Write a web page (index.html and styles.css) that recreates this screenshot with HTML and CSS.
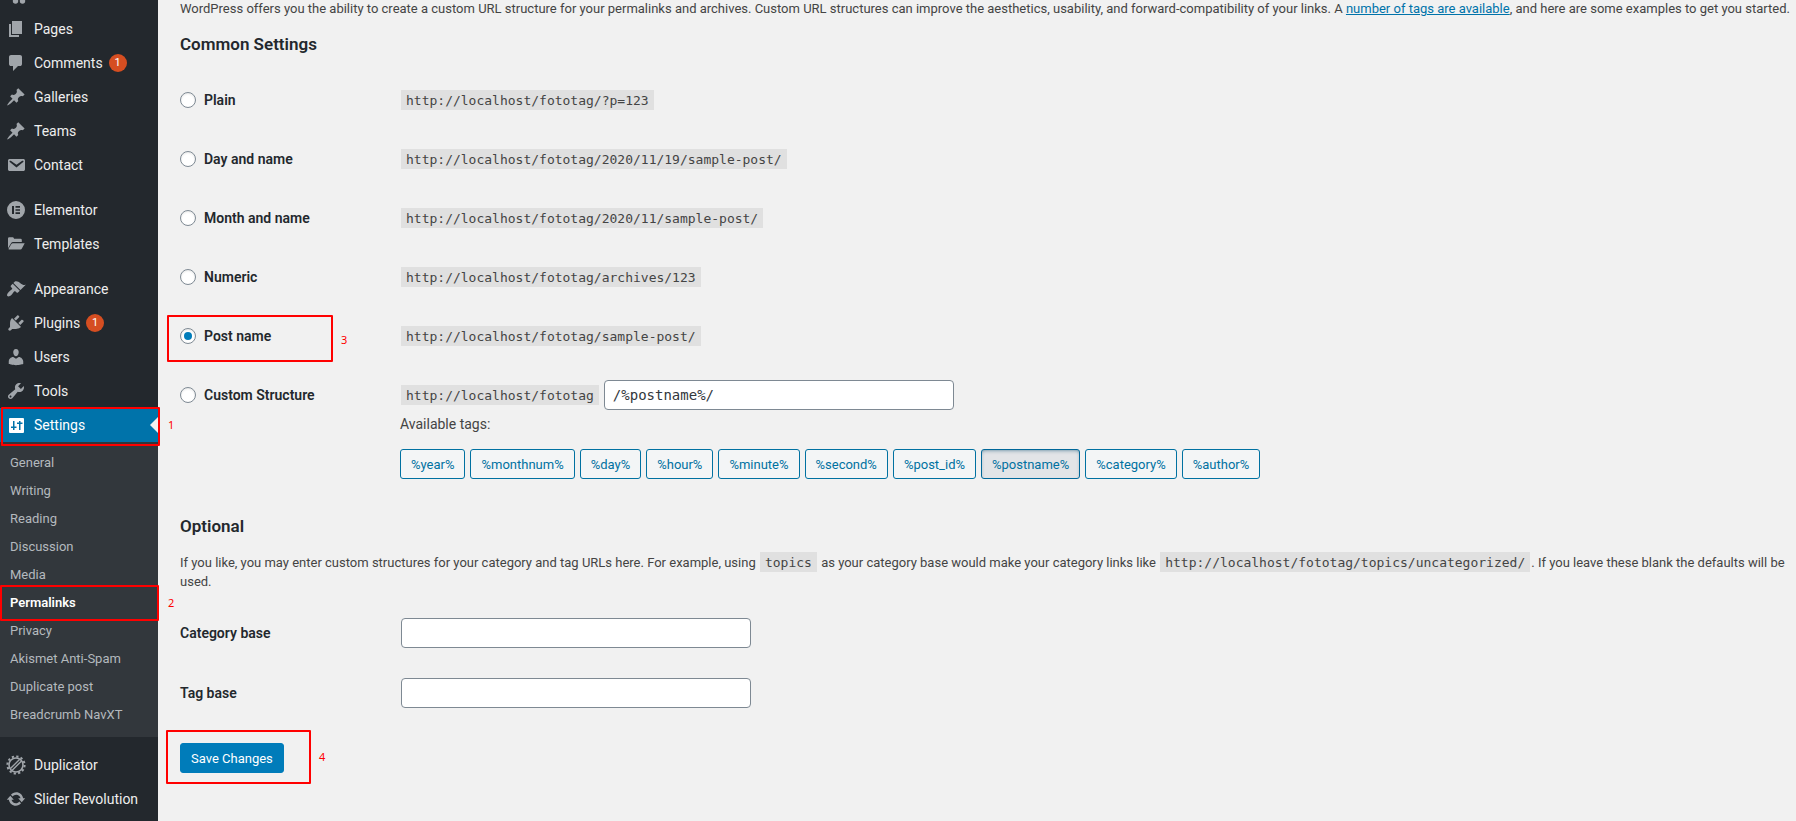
FILE: index.html
```html
<!DOCTYPE html>
<html lang="en">
<head>
<meta charset="utf-8">
<title>Permalink Settings</title>
<link rel="stylesheet" href="styles.css">
</head>
<body>
<div class="admin">
  <nav class="sidebar" aria-label="Main menu">
    <div class="clipped-item"><svg class="icon-tail" viewBox="0 0 20 12" aria-hidden="true"><circle cx="9.500" cy="1" r="2.700"/><circle cx="16.500" cy="1" r="2.700"/></svg></div>
    <ul class="menu">
      <li><a class="item" href="#"><svg class="icon" viewBox="0 0 20 20"><path d="M6 15V2h10v13H6zm-1 1h8v2H3V5h2v11z"/></svg>Pages</a></li>
      <li><a class="item" href="#"><svg class="icon" viewBox="0 0 20 20"><path d="M5 2h9q.82 0 1.410.59T16 4v7q0 .82-.59 1.410T14 13h-2l-5 5v-5H5q-.82 0-1.410-.59T3 11V4q0-.82.59-1.410T5 2z"/></svg>Comments<span class="badge">1</span></a></li>
      <li><a class="item" href="#"><svg class="icon" viewBox="0 0 20 20"><path d="M10.440 3.020l1.820-1.820 6.360 6.350-1.830 1.820c-1.050-.68-2.480-.57-3.410.36l-.75.75c-.92.93-1.040 2.350-.35 3.410l-1.830 1.820-2.410-2.410-2.800 2.790c-.42.42-3.380 2.710-3.800 2.290s1.860-3.390 2.280-3.810l2.790-2.790L4.100 9.360l1.830-1.820c1.050.69 2.480.57 3.400-.36l.75-.75c.93-.92 1.050-2.350.36-3.410z"/></svg>Galleries</a></li>
      <li><a class="item" href="#"><svg class="icon" viewBox="0 0 20 20"><path d="M10.440 3.020l1.820-1.820 6.360 6.350-1.830 1.820c-1.050-.68-2.480-.57-3.410.36l-.75.75c-.92.93-1.040 2.350-.35 3.410l-1.830 1.820-2.410-2.410-2.800 2.790c-.42.42-3.380 2.710-3.800 2.290s1.860-3.390 2.280-3.810l2.790-2.790L4.100 9.360l1.830-1.820c1.050.69 2.480.57 3.400-.36l.75-.75c.93-.92 1.050-2.350.36-3.410z"/></svg>Teams</a></li>
      <li><a class="item" href="#"><svg class="icon" viewBox="0 0 20 20"><path d="M3.870 4h13.250C18.370 4 19 4.590 19 5.790v8.420c0 1.190-.63 1.790-1.880 1.790H3.870c-1.250 0-1.880-.6-1.880-1.790V5.790c0-1.200.63-1.790 1.880-1.790zm6.620 8.600l6.740-5.530c.24-.2.43-.66.13-1.070-.29-.41-.82-.42-1.170-.17l-5.700 3.860L4.800 5.830c-.35-.25-.88-.24-1.170.17-.3.41-.11.87.13 1.070z"/></svg>Contact</a></li>
    </ul>
    <ul class="menu">
      <li><a class="item" href="#"><svg class="icon" viewBox="0 0 20 20"><path fill-rule="evenodd" d="M10 1a9 9 0 1 0 0 18a9 9 0 0 0 0-18zM6 6h2v8H6zM9.500 6H14v1.700H9.500zM9.500 9.150H14v1.700H9.500zM9.500 12.300H14V14H9.500z"/></svg>Elementor</a></li>
      <li><a class="item" href="#"><svg class="icon" viewBox="0 0 20 20"><path d="M2 14.200V4.500Q2 3.200 3.300 3.200H6.800Q8 3.200 8 4.700H14.500Q15.800 4.700 15.800 6V8H7Q5.800 8 5.200 9zM6.900 9.200H18.700L15.900 14.500Q15.400 15.400 14.400 15.400H3Q2.200 15.400 2.700 14.500L5.200 10.200Q5.800 9.200 6.900 9.200z"/></svg>Templates</a></li>
    </ul>
    <ul class="menu">
      <li><a class="item" href="#"><svg class="icon" viewBox="0 0 20 20"><path d="M14.480 11.060L7.410 3.990l1.500-1.500c.5-.56 2.300-.47 3.510.32 1.210.8 1.430 1.280 2.910 2.100 1.180.64 2.450 1.260 4.450.85zm-.71.71L6.700 4.700 4.930 6.470c-.39.39-.39 1.020 0 1.410l1.060 1.060c.39.39.39 1.030 0 1.420-.6.6-1.430 1.110-2.210 1.690-.35.26-.7.53-1.010.84C1.430 14.230.4 16.080 1.400 17.070c.99 1 2.840-.03 4.180-1.360.31-.31.58-.66.85-1.020.57-.78 1.080-1.610 1.690-2.210.39-.39 1.020-.39 1.410 0l1.060 1.060c.39.39 1.020.39 1.410 0z"/></svg>Appearance</a></li>
      <li><a class="item" href="#"><svg class="icon" viewBox="0 0 20 20"><path d="M13.110 4.360L9.870 7.600 8 5.730l3.240-3.240c.35-.34 1.050-.2 1.560.32.52.51.66 1.210.31 1.550zm-8 1.770l.91-1.120 9.010 9.010-1.190.84c-.71.71-2.630 1.160-3.820 1.160H6.140L4.900 17.260c-.59.59-1.540.59-2.120 0-.59-.58-.59-1.530 0-2.120l1.240-1.240v-3.880c0-1.130.4-3.190 1.090-3.890zm7.260 3.970l3.240-3.240c.34-.35 1.040-.21 1.550.31.52.51.66 1.210.31 1.550l-3.240 3.250z"/></svg>Plugins<span class="badge">1</span></a></li>
      <li><a class="item" href="#"><svg class="icon" viewBox="0 0 20 20"><path d="M10 9.250c-2.270 0-2.730-3.440-2.730-3.440C7 4.020 7.820 2 9.970 2c2.160 0 2.980 2.020 2.710 3.810 0 0-.41 3.440-2.680 3.440zm0 2.570L12.720 10c2.390 0 4.520 2.330 4.520 4.530v2.490s-3.650 1.130-7.240 1.130c-3.650 0-7.240-1.130-7.240-1.130v-2.490c0-2.250 1.940-4.480 4.470-4.480z"/></svg>Users</a></li>
      <li><a class="item" href="#"><svg class="icon" viewBox="0 0 20 20"><path d="M16.680 9.770c-1.340 1.340-3.300 1.670-4.950.99l-5.410 6.520c-.99.99-2.590.99-3.580 0s-.99-2.590 0-3.570l6.520-5.420c-.68-1.650-.35-3.610.99-4.950 1.280-1.280 3.120-1.620 4.720-1.060l-2.890 2.890 2.820 2.820 2.860-2.870c.53 1.580.18 3.390-1.080 4.650zM3.810 16.210c.4.39 1.040.39 1.430 0 .4-.4.4-1.040 0-1.430-.39-.4-1.030-.4-1.430 0-.39.39-.39 1.030 0 1.430z"/></svg>Tools</a></li>
      <li class="marked">
        <a class="item current" href="#"><svg class="icon" viewBox="0 0 20 20"><path fill-rule="evenodd" d="M4 3h13q1 0 1 1v13q0 1-1 1H4q-1 0-1-1V4q0-1 1-1zM7 6v5.500H5V13h2v2h1.500v-2h2v-1.500h-2V6zM13 6v1.500h-2V9h2v6h1.500V9h2V7.500h-2V6z"/></svg>Settings</a>
        <span class="frame frame-settings"></span><span class="step step-settings">1</span>
      </li>
    </ul>
    <ul class="submenu">
      <li><a href="#">General</a></li>
      <li><a href="#">Writing</a></li>
      <li><a href="#">Reading</a></li>
      <li><a href="#">Discussion</a></li>
      <li><a href="#">Media</a></li>
      <li class="marked"><a class="selected" href="#" aria-current="page">Permalinks</a><span class="frame frame-permalinks"></span><span class="step step-permalinks">2</span></li>
      <li><a href="#">Privacy</a></li>
      <li><a href="#">Akismet Anti-Spam</a></li>
      <li><a href="#">Duplicate post</a></li>
      <li><a href="#">Breadcrumb NavXT</a></li>
    </ul>
    <ul class="menu">
      <li><a class="item" href="#"><svg class="icon" viewBox="0 0 20 20"><g fill="none" stroke="currentColor"><circle cx="10" cy="10" r="8.600" stroke-width="2" stroke-dasharray="2.250 2.250"/><circle cx="10" cy="10" r="7" stroke-width="1.600"/><path d="M4.500 13.500L13.500 4.500M6 15.500L15.500 6" stroke-width="1.400"/></g></svg>Duplicator</a></li>
      <li><a class="item" href="#"><svg class="icon" viewBox="0 0 20 20"><path d="M10.200 3.280c3.530 0 6.430 2.610 6.920 6h2.080l-3.500 4-3.500-4h2.320c-.45-1.970-2.210-3.450-4.320-3.450-1.450 0-2.730.71-3.540 1.780L4.950 5.660C6.230 4.200 8.110 3.280 10.200 3.280zm-.4 13.440c-3.520 0-6.430-2.610-6.920-6H.8l3.500-4c1.170 1.330 2.330 2.670 3.500 4H5.480c.45 1.970 2.210 3.450 4.320 3.450 1.450 0 2.730-.71 3.540-1.780l1.710 1.950c-1.280 1.460-3.150 2.380-5.250 2.380z"/></svg>Slider Revolution</a></li>
    </ul>
  </nav>

  <main class="content">
    <form>
      <p class="intro">WordPress offers you the ability to create a custom URL structure for your permalinks and archives. Custom URL structures can improve the aesthetics, usability, and forward-compatibility of your links. A <a href="#">number of tags are available</a>, and here are some examples to get you started.</p>
      <h2>Common Settings</h2>
      <div class="rows">
        <div class="row"><label class="name"><input type="radio" name="structure">Plain</label><div><code>http://localhost/fototag/?p=123</code></div></div>
        <div class="row"><label class="name"><input type="radio" name="structure">Day and name</label><div><code>http://localhost/fototag/2020/11/19/sample-post/</code></div></div>
        <div class="row"><label class="name"><input type="radio" name="structure">Month and name</label><div><code>http://localhost/fototag/2020/11/sample-post/</code></div></div>
        <div class="row"><label class="name"><input type="radio" name="structure">Numeric</label><div><code>http://localhost/fototag/archives/123</code></div></div>
        <div class="row marked"><label class="name"><input type="radio" name="structure" checked>Post name</label><div><code>http://localhost/fototag/sample-post/</code></div><span class="frame frame-post"></span><span class="step step-post">3</span></div>
        <div class="row custom">
          <label class="name"><input type="radio" name="structure">Custom Structure</label>
          <div>
            <div class="structure"><code>http://localhost/fototag</code><input class="field mono" type="text" value="/%postname%/" aria-label="Custom structure"></div>
            <p class="available">Available tags:</p>
            <div class="tags">
              <button type="button" class="tag">%year%</button>
              <button type="button" class="tag">%monthnum%</button>
              <button type="button" class="tag">%day%</button>
              <button type="button" class="tag">%hour%</button>
              <button type="button" class="tag">%minute%</button>
              <button type="button" class="tag">%second%</button>
              <button type="button" class="tag">%post_id%</button>
              <button type="button" class="tag active" aria-pressed="true">%postname%</button>
              <button type="button" class="tag">%category%</button>
              <button type="button" class="tag">%author%</button>
            </div>
          </div>
        </div>
      </div>
      <h2 class="optional">Optional</h2>
      <p class="intro">If you like, you may enter custom structures for your category and tag URLs here. For example, using <code>topics</code> as your category base would make your category links like <code>http://localhost/fototag/topics/uncategorized/</code>. If you leave these blank the defaults will be used.</p>
      <div class="rows">
        <div class="row base"><label class="name" for="category-base">Category base</label><div class="structure"><input class="field" id="category-base" type="text"></div></div>
        <div class="row base"><label class="name" for="tag-base">Tag base</label><div class="structure"><input class="field" id="tag-base" type="text"></div></div>
      </div>
      <div class="submit marked"><button type="button" class="save">Save Changes</button><span class="frame frame-save"></span><span class="step step-save">4</span></div>
    </form>
  </main>
</div>
</body>
</html>
```
FILE: styles.css
```css
* {
  box-sizing: border-box;
}

body {
  margin: 0;
  background: #f1f1f1;
  color: #444;
  font: 13px/19px Roboto, sans-serif;
}

ul,
p,
h2 {
  margin: 0;
  padding: 0;
}

ul {
  list-style: none;
}

.admin {
  display: flex;
  min-height: 100vh;
}

/* Sidebar */
.sidebar {
  flex: 0 0 158px;
  background: #23282d;
}

.clipped-item {
  height: 12px;
  padding-left: 6px;
}

.icon-tail {
  display: block;
  width: 20px;
  height: 12px;
  fill: #a0a5aa;
}

.menu + .menu,
.submenu + .menu {
  margin-top: 11px;
}

.item {
  display: flex;
  align-items: center;
  height: 34px;
  padding-left: 6px;
  color: #eee;
  font-size: 14px;
  text-decoration: none;
}

.icon {
  width: 20px;
  height: 20px;
  margin-right: 8px;
  fill: currentColor;
  color: #a0a5aa;
}

.badge {
  width: 18px;
  height: 18px;
  margin-left: 6px;
  border-radius: 9px;
  background: #d54e21;
  color: #fff;
  font-size: 11px;
  line-height: 18px;
  text-align: center;
}

.current {
  position: relative;
  background: #0073aa;
  color: #fff;
}

.current .icon {
  color: #fff;
}

.current::after {
  content: "";
  position: absolute;
  top: 9px;
  right: 0;
  border: 8px solid transparent;
  border-left-width: 0;
  border-right-color: #f1f1f1;
}

.submenu {
  padding: 7px 0 8px;
  background: #32373c;
}

.submenu a {
  display: block;
  padding-left: 10px;
  color: #b4b9be;
  line-height: 28px;
  text-decoration: none;
}

.submenu .selected {
  color: #fff;
  font-weight: 600;
}

/* Settings form */
.content {
  flex: 1;
  min-width: 0;
  margin-top: -1px;
  padding: 0 0 20px 22px;
}

.intro a {
  color: #0073aa;
}

h2 {
  margin: 14px 0;
  color: #23282d;
  font-size: 17px;
  font-weight: 600;
  line-height: 24px;
}

h2.optional {
  margin: 20px 0 15px;
}

.row {
  display: grid;
  grid-template-columns: 220px 1fr;
  align-items: center;
  min-height: 59px;
  font-size: 14px;
  line-height: 20px;
}

.row.custom {
  align-items: start;
  padding: 15px 0;
}

.custom > .name {
  line-height: 30px;
}

.name {
  display: flex;
  align-items: center;
  color: #23282d;
  font-weight: 600;
}

.name input {
  appearance: none;
  display: grid;
  place-items: center;
  width: 16px;
  height: 16px;
  margin: 0 8px 0 0;
  border: 1px solid #7e8993;
  border-radius: 50%;
  background: #fff;
  box-shadow: inset 0 1px 2px rgba(0, 0, 0, 0.1);
}

.name input:checked::before {
  content: "";
  width: 8px;
  height: 8px;
  border-radius: 50%;
  background: #007cba;
}

code {
  margin: 0 1px;
  padding: 3px 5px 2px;
  background: rgba(0, 0, 0, 0.07);
  font: 13px "DejaVu Sans Mono", monospace;
}

.structure {
  display: flex;
  align-items: center;
}

.field {
  width: 350px;
  height: 30px;
  margin: 0 1px;
  padding: 0 8px;
  border: 1px solid #7e8993;
  border-radius: 4px;
  background: #fff;
  color: #32373c;
  font: 14px Roboto, sans-serif;
}

.mono {
  margin-left: 4px;
  font-family: "DejaVu Sans Mono", monospace;
}

.available {
  padding: 4px 0 15px;
}

.tags {
  display: flex;
  flex-wrap: wrap;
  gap: 5px;
}

.tag,
.save {
  height: 30px;
  padding: 0 10px;
  border: 1px solid #0071a1;
  border-radius: 3px;
  background: #f3f5f6;
  color: #0071a1;
  font: 13px Roboto, sans-serif;
}

.tag.active {
  border-color: #006799;
  background: #e2e4e7;
  box-shadow: inset 0 2px 5px -3px #00486b;
}

.intro + .rows {
  padding-top: 12px;
}

.row.base {
  min-height: 60px;
}

.submit {
  padding-top: 20px;
}

.save {
  border-color: #007cba;
  background: #007cba;
  color: #fff;
}

/* Numbered step callouts */
.marked {
  position: relative;
}

.frame {
  position: absolute;
  z-index: 1;
  border: 2px solid #f00;
  border-radius: 1px;
  pointer-events: none;
}

.step {
  position: absolute;
  z-index: 1;
  color: #f00;
  font: 11px/14px "Noto Sans", sans-serif;
}

.frame-settings {
  inset: -1px -2px -4px 1px;
}

.step-settings {
  top: 10px;
  left: 168px;
}

.frame-permalinks {
  inset: -4px -1px -4px 0;
}

.step-permalinks {
  top: 7px;
  left: 168px;
}

.frame-post {
  top: 9px;
  left: -13px;
  width: 166px;
  height: 47px;
}

.step-post {
  top: 27px;
  left: 161px;
}

.frame-save {
  top: 7px;
  left: -14px;
  width: 145px;
  height: 54px;
}

.step-save {
  top: 27px;
  left: 139px;
}
```
